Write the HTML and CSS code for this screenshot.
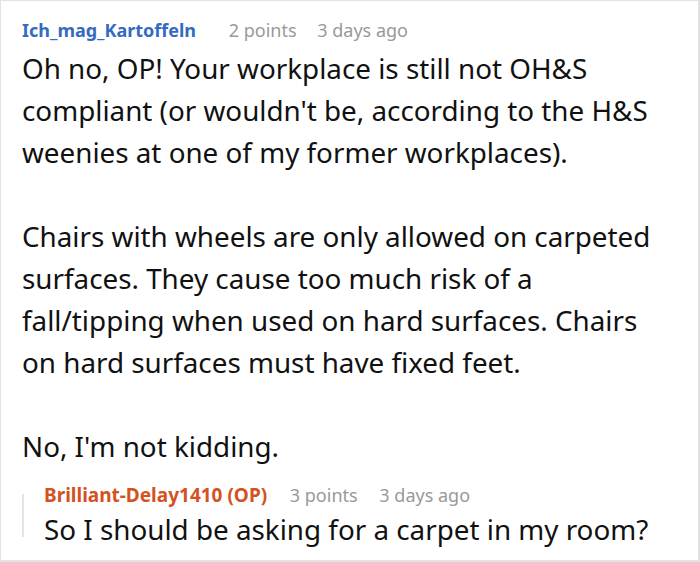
FILE: index.html
```html
<!DOCTYPE html>
<html lang="en">
<head>
    <meta charset="UTF-8">
    <title>Comment</title>
    <link rel="stylesheet" href="styles.css">
</head>
<body>
    <div class="comment">
        <div class="meta">
            <span class="author">Ich_mag_Kartoffeln</span>
            <span class="points">2 points</span>
            <span class="time">3 days ago</span>
        </div>
        <div class="body">
            <p>Oh no, OP! Your workplace is still not OH&amp;S compliant (or wouldn't be, according to the H&amp;S weenies at one of my former workplaces).</p>
            <p>Chairs with wheels are only allowed on carpeted surfaces. They cause too much risk of a fall/tipping when used on hard surfaces. Chairs on hard surfaces must have fixed feet.</p>
            <p>No, I'm not kidding.</p>
        </div>

        <div class="reply">
            <div class="meta">
                <span class="author op">Brilliant-Delay1410 (OP)</span>
                <span class="points">3 points</span>
                <span class="time">3 days ago</span>
            </div>
            <p class="reply-text">So I should be asking for a carpet in my room?</p>
        </div>
    </div>
</body>
</html>
```

FILE: styles.css
```css
body {
    margin: 0;
    padding: 0;
    background: #fff;
    font-family: 'Noto Sans', 'Open Sans', sans-serif;
    color: #111;
}

.comment {
    box-sizing: border-box;
    width: 700px;
    height: 562px;
    border: 1px solid #e3e3e3;
    border-right-width: 2px;
    border-bottom-width: 2px;
    padding: 17px 0 0 21px;
    overflow: hidden;
}

.meta {
    font-size: 18px;
    line-height: 24px;
    color: #999;
    white-space: nowrap;
}

.author {
    font-weight: 700;
    color: #336bbf;
    margin-right: 28px;
}

.points {
    margin-right: 16px;
}

.body {
    width: 645px;
    margin-top: 5px;
    font-size: 27.8px;
    line-height: 42px;
}

.body p {
    margin: 0 0 42px 0;
}

.body p:last-child {
    margin-bottom: 0;
}

/* nested reply with the grey thread line */
.reply {
    position: relative;
    margin-top: 16px;
    padding-left: 22px;
}

.reply::before {
    content: '';
    position: absolute;
    left: 0;
    top: 11px;
    bottom: 11px;
    width: 2px;
    background: #e4e4e4;
}

.reply .author {
    color: #d4521f;
    font-size: 19px;
    margin-right: 18px;
}

.reply .points {
    margin-right: 17px;
}

.reply-text {
    margin: 3px 0 0 0;
    font-size: 27.8px;
    line-height: 38px;
    white-space: nowrap;
}
```
